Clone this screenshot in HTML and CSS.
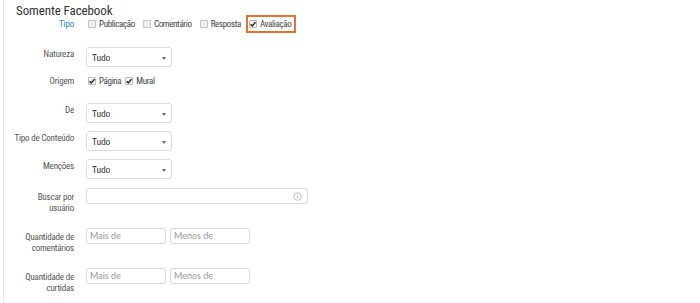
FILE: index.html
```html
<!DOCTYPE html>
<html lang="pt-BR">
<head>
<meta charset="utf-8">
<title>Somente Facebook</title>
<link rel="stylesheet" href="styles.css">
</head>
<body>
<div class="panel">
  <h2 class="title">Somente Facebook</h2>
  <div class="form">
    <div class="row row-tipo">
      <div class="label label-blue"><span>Tipo</span></div>
      <div class="control checks">
        <span class="check"><span class="box"></span>Publicação</span>
        <span class="check"><span class="box"></span>Comentário</span>
        <span class="check"><span class="box"></span>Resposta</span>
        <span class="check highlight"><span class="box on"><svg viewBox="0 0 8 8"><path d="M1.6 4.2 L3.3 5.9 L6.6 2.1" /></svg></span>Avaliação</span>
      </div>
    </div>

    <div class="row row-natureza">
      <div class="label"><span>Natureza</span></div>
      <div class="control"><div class="select"><span>Tudo</span><i class="caret"></i></div></div>
    </div>

    <div class="row row-origem">
      <div class="label"><span>Origem</span></div>
      <div class="control checks">
        <span class="check"><span class="box on"><svg viewBox="0 0 8 8"><path d="M1.6 4.2 L3.3 5.9 L6.6 2.1" /></svg></span>Página</span>
        <span class="check"><span class="box on"><svg viewBox="0 0 8 8"><path d="M1.6 4.2 L3.3 5.9 L6.6 2.1" /></svg></span>Mural</span>
      </div>
    </div>

    <div class="row row-sel">
      <div class="label"><span>De</span></div>
      <div class="control"><div class="select"><span>Tudo</span><i class="caret"></i></div></div>
    </div>

    <div class="row row-sel">
      <div class="label"><span>Tipo de Conteúdo</span></div>
      <div class="control"><div class="select"><span>Tudo</span><i class="caret"></i></div></div>
    </div>

    <div class="row row-sel">
      <div class="label"><span>Menções</span></div>
      <div class="control"><div class="select"><span>Tudo</span><i class="caret"></i></div></div>
    </div>

    <div class="row row-multi">
      <div class="label"><span>Buscar por<br>usuário</span></div>
      <div class="control">
        <div class="search">
          <svg class="info" viewBox="0 0 10 10"><circle cx="5" cy="5" r="4.2"/><path d="M5 4.3 V7.2"/><circle class="dot" cx="5" cy="3" r="0.5"/></svg>
        </div>
      </div>
    </div>

    <div class="row row-multi">
      <div class="label"><span>Quantidade de<br>comentários</span></div>
      <div class="control pair">
        <div class="num">Mais de</div>
        <div class="num">Menos de</div>
      </div>
    </div>

    <div class="row row-multi">
      <div class="label"><span>Quantidade de<br>curtidas</span></div>
      <div class="control pair">
        <div class="num">Mais de</div>
        <div class="num">Menos de</div>
      </div>
    </div>
  </div>
</div>
</body>
</html>
```

FILE: styles.css
```css
* { box-sizing: border-box; }
html, body { margin: 0; padding: 0; background: #fff; }
body {
  font-family: "Roboto Condensed", "Liberation Sans Narrow", "Arial Narrow", "DejaVu Sans Condensed", sans-serif;
  color: #444;
  width: 700px;
  height: 303px;
  overflow: hidden;
}
.panel {
  margin-left: 3px;
  border-left: 1px solid #e6e6e6;
  height: 303px;
  padding: 4px 0 0 12px;
}
.title {
  margin: 0;
  font-size: 13px;
  line-height: 14px;
  font-weight: normal;
  letter-spacing: -0.1px;
  color: #333;
}
.form { display: flex; flex-direction: column; }
.row {
  display: grid;
  grid-template-columns: 58px 1fr;
  column-gap: 12px;
  align-items: start;
}
.label {
  display: flex;
  justify-content: flex-end;
  text-align: right;
  white-space: nowrap;
  font-size: 9px;
  letter-spacing: -0.2px;
  line-height: 12px;
  color: #555;
}
.label-blue { color: #2f80c8; }
.row-tipo { margin-top: 0; }
.row-natureza { margin-top: 17px; }
.row-origem { margin-top: 7px; }
.row-origem .label { padding-top: 1px; }
.row-sel { margin-top: 8px; }
.row-origem + .row-sel { margin-top: 15px; }
.row-multi { margin-top: 9px; }
.row-multi + .row-multi { margin-top: 14px; }
.row-sel .label, .row-natureza .label { padding-top: 1px; }
.row-multi .label { padding-top: 4px; line-height: 11px; }

.checks {
  display: flex;
  align-items: center;
  gap: 8px;
  height: 12px;
  padding-left: 2px;
  font-size: 9px;
  letter-spacing: -0.35px;
  color: #444;
}
.row-origem .checks { height: 14px; gap: 4px; }
.check { display: inline-flex; align-items: center; gap: 3px; line-height: 12px; white-space: nowrap; }
.box {
  width: 8px;
  height: 8px;
  border: 1px solid #c4c4c4;
  background: #eee;
  border-radius: 1px;
  display: inline-block;
  position: relative;
  flex: none;
}
.box.on { background: #f4f4f4; border-color: #bbb; }
.box svg { position: absolute; left: -1px; top: -1px; width: 8px; height: 8px; }
.box svg path { fill: none; stroke: #222; stroke-width: 1.4; }
.highlight {
  outline: 2px solid #e8722c;
  outline-offset: 1px;
  padding-right: 2px;
}

.select {
  width: 86px;
  height: 20px;
  border: 1px solid #dcdcdc;
  border-radius: 3px;
  display: flex;
  align-items: center;
  justify-content: space-between;
  padding: 0 5px 0 5px;
  font-size: 9.5px;
  letter-spacing: -0.1px;
  color: #333;
  background: #fff;
}
.caret {
  width: 0; height: 0;
  border-left: 2px solid transparent;
  border-right: 2px solid transparent;
  border-top: 3px solid #666;
  margin-top: 2px;
}
.search {
  width: 222px;
  height: 16px;
  border: 1px solid #dcdcdc;
  border-radius: 3px;
  display: flex;
  align-items: center;
  justify-content: flex-end;
  padding-right: 5px;
}
.info { width: 9px; height: 9px; }
.info circle { fill: none; stroke: #aaa; stroke-width: 0.8; }
.info path { stroke: #aaa; stroke-width: 0.9; }
.info .dot { fill: #aaa; stroke: none; }
.pair { display: flex; gap: 4px; }
.num {
  width: 80px;
  height: 16px;
  border: 1px solid #dcdcdc;
  border-radius: 2px;
  font-family: Lato, "Open Sans", sans-serif;
  font-size: 9px;
  line-height: 14px;
  color: #999;
  padding-left: 3px;
}
```
